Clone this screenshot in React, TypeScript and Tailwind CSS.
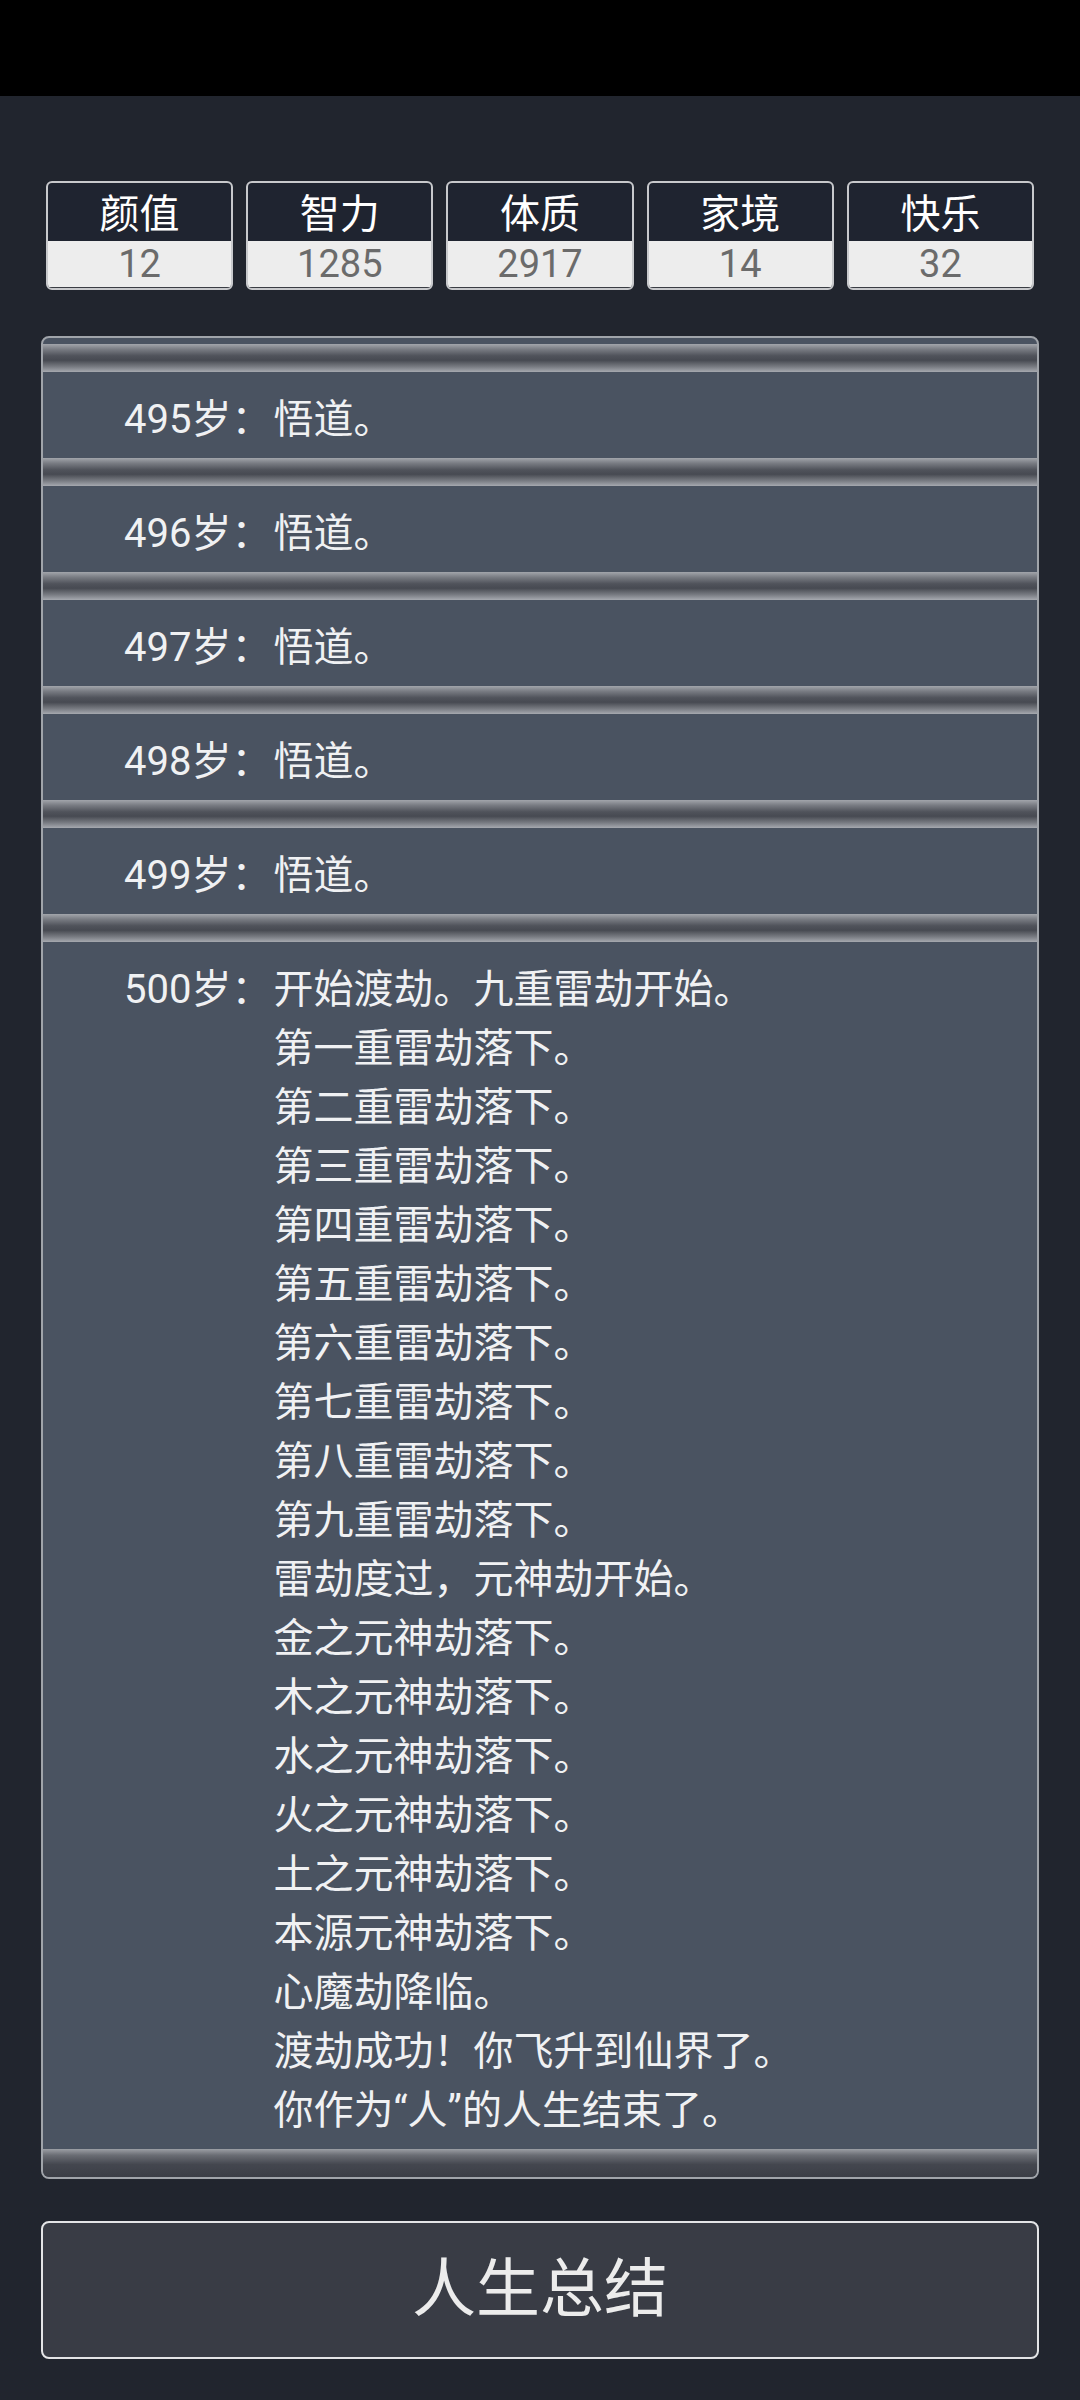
import React from 'react'

const stats = [
    { label: '颜值', value: '12' },
    { label: '智力', value: '1285' },
    { label: '体质', value: '2917' },
    { label: '家境', value: '14' },
    { label: '快乐', value: '32' },
]

const events: { age: number; lines: string[] }[] = [
    { age: 495, lines: ['悟道。'] },
    { age: 496, lines: ['悟道。'] },
    { age: 497, lines: ['悟道。'] },
    { age: 498, lines: ['悟道。'] },
    { age: 499, lines: ['悟道。'] },
    {
        age: 500,
        lines: [
            '开始渡劫。九重雷劫开始。',
            '第一重雷劫落下。',
            '第二重雷劫落下。',
            '第三重雷劫落下。',
            '第四重雷劫落下。',
            '第五重雷劫落下。',
            '第六重雷劫落下。',
            '第七重雷劫落下。',
            '第八重雷劫落下。',
            '第九重雷劫落下。',
            '雷劫度过，元神劫开始。',
            '金之元神劫落下。',
            '木之元神劫落下。',
            '水之元神劫落下。',
            '火之元神劫落下。',
            '土之元神劫落下。',
            '本源元神劫落下。',
            '心魔劫降临。',
            '渡劫成功！你飞升到仙界了。',
            '你作为“人”的人生结束了。',
        ],
    },
]

// groove between two entries
const Groove = () => (
    <div className="h-[28px] bg-[linear-gradient(to_bottom,#a2a5ab_0%,#7a7d84_18%,#50535b_42%,#474a52_58%,#7a7d84_82%,#a6a9af_100%)]" />
)

export default function App() {
    return (
        <div
            className="min-h-[2400px] bg-[#21252e] flex flex-col"
            style={{ fontFamily: 'Roboto, "Noto Sans CJK SC", sans-serif' }}
        >
            <div className="h-[96px] bg-black" />

            {/* *Stats */}
            <div className="flex gap-[13px] px-[46px] pt-[85px]">
                {stats.map((s) => (
                    <div
                        key={s.label}
                        className="flex-1 h-[109px] flex flex-col rounded-[6px] border-2 border-[#c8c9cc] overflow-hidden bg-[#1f2430]"
                    >
                        <div className="h-[58px] pt-[6px] flex items-center justify-center text-[40px] leading-[52px] text-white">
                            {s.label}
                        </div>
                        <div className="flex-1 flex items-center justify-center bg-[#ededed] border-b border-[#3a3d44] text-[38px] leading-[46px] text-[#6b6b6b]">
                            {s.value}
                        </div>
                    </div>
                ))}
            </div>

            {/* *Trajectory */}
            <div className="mx-[41px] mt-[46px] rounded-[8px] border-2 border-[#a0a4aa] bg-[#4a5361] overflow-hidden pt-[6px]">
                {events.map((e) => (
                    <div key={e.age}>
                        <Groove />
                        <div className="flex pl-[81px] pt-[18px] pb-[9px] text-[40px] leading-[59px] text-[#f0f1f3]">
                            <span className="shrink-0">{e.age}岁：</span>
                            <div className="flex flex-col pl-[2px]">
                                {e.lines.map((l, i) => (
                                    <span key={i}>{l}</span>
                                ))}
                            </div>
                        </div>
                    </div>
                ))}
                <div className="h-[28px] bg-[linear-gradient(to_bottom,#9c9fa5_0%,#6a6d74_22%,#44474f_55%,#3b3e46_100%)]" />
            </div>

            {/* *Summary */}
            <button className="mx-[41px] mt-[42px] h-[138px] rounded-[8px] border-2 border-[#e4e5e7] bg-[#393c45] text-[64px] text-[#ececec] flex items-center justify-center">
                人生总结
            </button>
        </div>
    )
}
